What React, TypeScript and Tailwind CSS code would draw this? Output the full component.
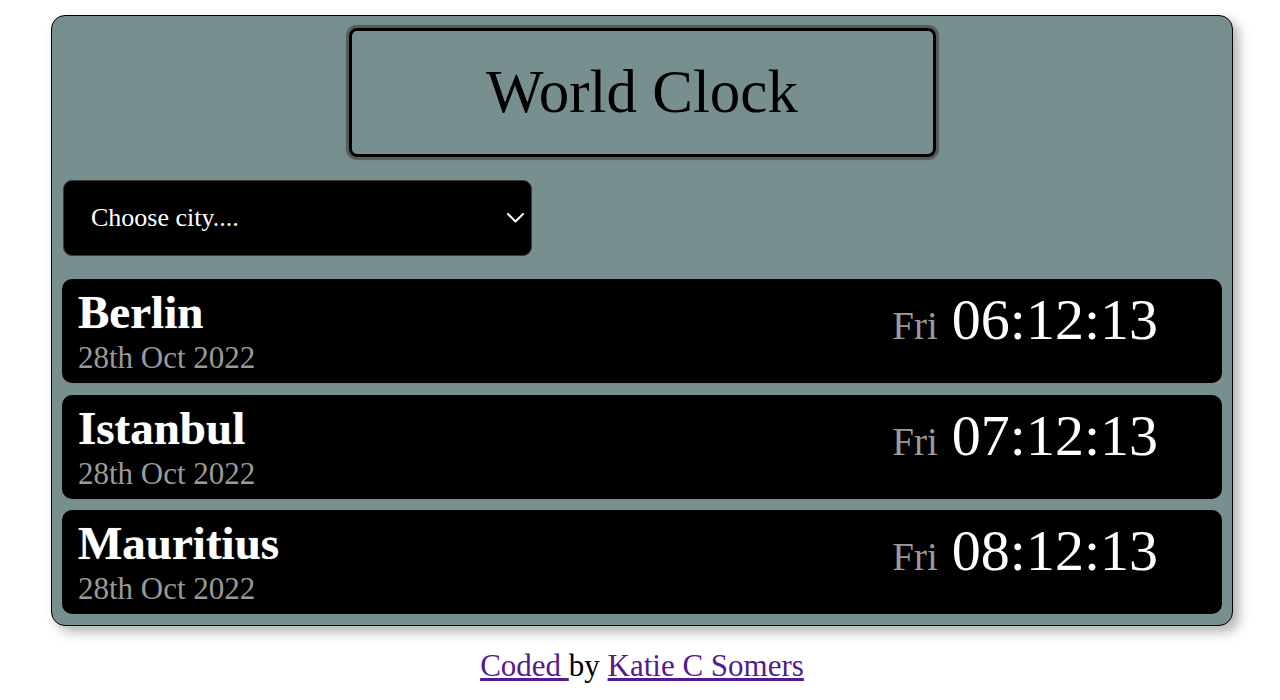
import React from "react";

const serif = { fontFamily: '"Liberation Serif", "Times New Roman", serif' };

const cities = [
  { name: "Berlin", date: "28th Oct 2022", day: "Fri", time: "06:12:13" },
  { name: "Istanbul", date: "28th Oct 2022", day: "Fri", time: "07:12:13" },
  { name: "Mauritius", date: "28th Oct 2022", day: "Fri", time: "08:12:13" },
];

export default function App() {
  return (
    <div className="min-h-[700px] bg-white pt-[15px]" style={serif}>
      <div className="ml-[51px] w-[1182px] rounded-[14px] border border-black bg-[#788f8f] px-[10px] pt-[12px] pb-[11px] shadow-[6px_6px_12px_rgba(0,0,0,0.3)]">
        <div className="flex justify-center">
          <div className="flex h-[129px] w-[587px] items-center justify-center rounded-[8px] border-[3px] border-black shadow-[0_0_1px_3px_rgba(70,70,70,0.7)]">
            <h1 className="-mt-[2px] text-[61px] leading-[70px] text-black">World Clock</h1>
          </div>
        </div>
        <div className="mt-[23px] ml-[1px] flex h-[76px] w-[469px] items-center justify-between rounded-[9px] border border-[#3a3a3a] bg-black pl-[27px] pr-[6px]">
          <span className="text-[26px] leading-none text-white">Choose city....</span>
          <svg width="19" height="12" viewBox="0 0 19 12" fill="none">
            <path d="M2 2 L9.5 9.5 L17 2" stroke="white" strokeWidth="2" strokeLinecap="round" strokeLinejoin="round" />
          </svg>
        </div>
        <div className="mt-[23px] flex flex-col gap-[11.5px]">
          {cities.map((c) => (
            <div key={c.name} className="flex h-[104px] justify-between rounded-[10px] bg-black pl-[16px] pr-[64px]">
              <div className="pt-[7px]">
                <div className="text-[47px] font-bold leading-[52px] text-white [text-shadow:0_0_1px_rgba(255,255,255,0.6)]">{c.name}</div>
                <div className="text-[31px] leading-[40px] text-[#9a9a9a]">{c.date}</div>
              </div>
              <div className="flex items-baseline gap-[14px] pt-[12px]">
                <span className="text-[39px] leading-none text-[#9a9a9a]">{c.day}</span>
                <span className="text-[58px] leading-none text-white">{c.time}</span>
              </div>
            </div>
          ))}
        </div>
      </div>
      <p className="mt-[17px] ml-[4px] text-center text-[31px] text-black">
        <a href="#" className="text-[#551a8b] underline">Coded </a>by{" "}
        <a href="#" className="text-[#551a8b] underline">Katie C Somers</a>
      </p>
    </div>
  );
}
